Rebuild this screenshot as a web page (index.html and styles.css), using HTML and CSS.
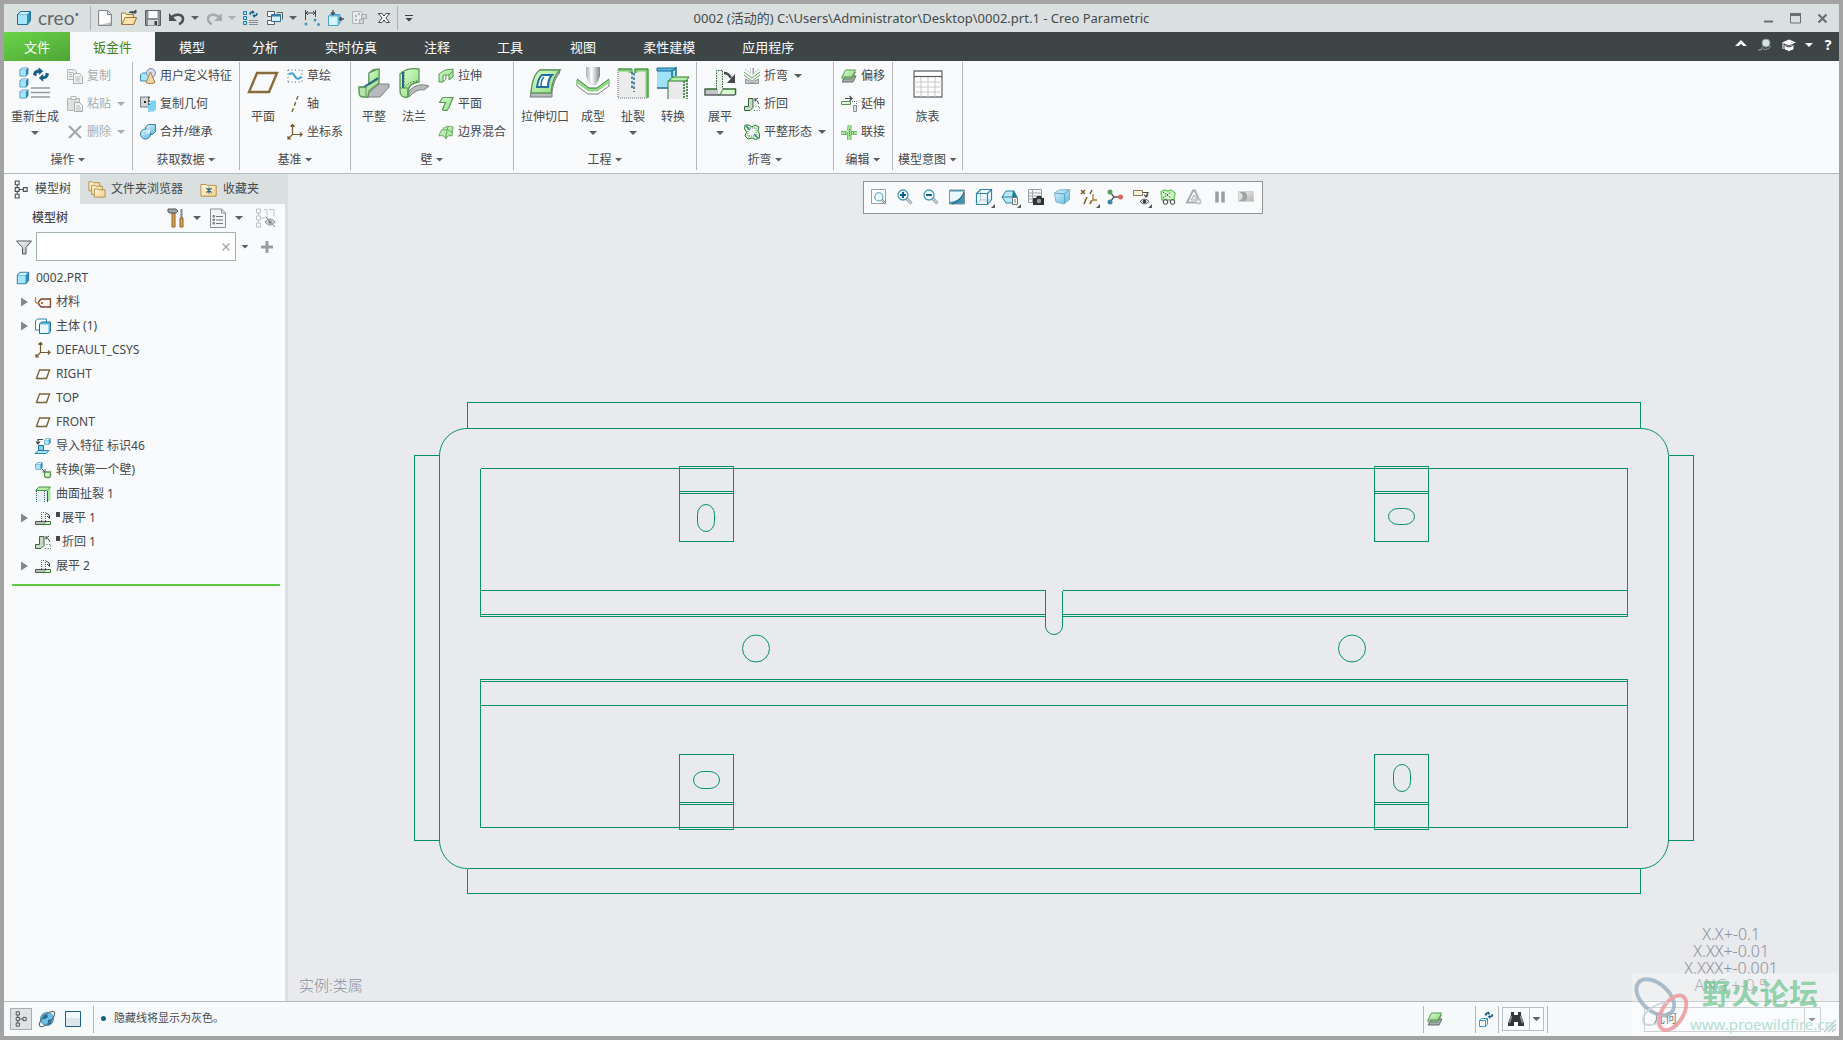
FILE: index.html
```html
<!DOCTYPE html>
<html lang="zh-CN">
<head>
<meta charset="utf-8">
<title>0002 (活动的) - Creo Parametric</title>
<link rel="stylesheet" href="styles.css">
</head>
<body>
<svg class="sprite" aria-hidden="true">
  <defs>
    <linearGradient id="g-blue" x1="0" y1="0" x2="1" y2="1"><stop offset="0" stop-color="#e2f5fd"/><stop offset="1" stop-color="#5cb8e0"/></linearGradient>
    <linearGradient id="g-green" x1="0" y1="0" x2="1" y2="1"><stop offset="0" stop-color="#d9fbd0"/><stop offset="1" stop-color="#8fdc80"/></linearGradient>
    <linearGradient id="g-steel" x1="0" y1="0" x2="1" y2="0"><stop offset="0" stop-color="#a9adb2"/><stop offset=".4" stop-color="#ffffff"/><stop offset="1" stop-color="#7d838b"/></linearGradient>
    <linearGradient id="g-tan" x1="0" y1="0" x2="1" y2="1"><stop offset="0" stop-color="#fff6df"/><stop offset="1" stop-color="#f3cf8c"/></linearGradient>
    <linearGradient id="g-gray" x1="0" y1="0" x2="1" y2="1"><stop offset="0" stop-color="#f4f4f4"/><stop offset="1" stop-color="#b4b4b4"/></linearGradient>
  </defs>
  <symbol id="cube" viewBox="0 0 16 16"><path d="M1.500 4.500l3-3h10v9l-3 4h-10z" fill="#2f8fbb" stroke="#1b6f98"/><path d="M2 4.500l3-2.500h8.500l-2.500 2.500z" fill="#d4f3fd"/><path d="M2 5h9v9H2z" fill="#a5e6fb"/></symbol>
  <symbol id="plane" viewBox="0 0 16 16"><path d="M4.500 4h10l-3 8.500h-10z" fill="none" stroke="#7d6435" stroke-width="1.400"/></symbol>
  <symbol id="csys" viewBox="0 0 16 16"><path d="M5.500 0v10.500H15M5.500 10.500L1 15M3.500 2.500l2-2 2 2M13 8.500l2 2-2 2M1 12v3h3" fill="none" stroke="#765a2a" stroke-width="1.200"/></symbol>
  <symbol id="treeicon" viewBox="0 0 16 20"><path d="M2 1h4v4H2zM2 8h4v4H2zM2 15h4v4H2zM10.500 8h4v4h-4zM4 5v3M4 12v3M6 10h4.500" fill="none" stroke="#4c4f52" stroke-width="1.200"/></symbol>
  <symbol id="swap" viewBox="0 0 16 13"><path d="M1 7c0-3 2-5 5-5V0l4 3.500L6 7V5C4 5 4 6 4 8zM15 5.500c0 3-2 5-5 5V13L6 9.500 10 6v2c2 0 2-1 2-3z" fill="#1a5f88"/></symbol>
  <symbol id="unbend" viewBox="0 0 16 16"><path d="M.5 11.500H7M9 14.500h6.500v-3H11" fill="none" stroke="#39733a"/><path d="M.5 11.500v3h8c2 0 2-3 4-3z" fill="#bcc0bd" stroke="#4f5b50"/><path d="M9.500 14l2-2H15v2z" fill="#d9fbd0"/><path d="M6.500 11V2.500h4V11" fill="#f1f2f2" stroke="#39733a" stroke-dasharray="1 1"/><path d="M11 3.500c2 0 3 1 3.500 4M12 6l2.500 2.500V5" fill="none" stroke="#4a4d50"/></symbol>
  <symbol id="bendback" viewBox="0 0 16 16"><path d="M.5 14.500v-4h4v-8h4.500v9l-3 3z" fill="#c9d8c8" stroke="#2f6b36"/><path d="M10 14.500h5.500v-4H11" fill="none" stroke="#3b7d3d" stroke-dasharray="1 1.500"/><path d="M14.500 8C14 5 13 4 11 4M11 2v3.500M11 4l3-2" fill="none" stroke="#45494c"/></symbol>
  <symbol id="rip" viewBox="0 0 16 16"><path d="M1 5h11v11H1z" fill="#ebecec"/><path d="M12 5l3.500-4v13L12 16z" fill="#a8e79b"/><path d="M.5 4.500L4 1h11.500L12 4.500z" fill="#b4f0a8" stroke="#4a9048"/><path d="M1.500 5v11M9.500 5v11" stroke="#246b87" stroke-dasharray="1 1" fill="none"/><path d="M12.500 5v11" stroke="#2f6b36" fill="none"/></symbol>
  <symbol id="sheets" viewBox="0 0 16 16"><path d="M1 14l4-6h10l-3 6z" fill="#a9adb0" stroke="#66696b"/><path d="M1 9l3.500-7h10L11 9z" fill="url(#g-green)" stroke="#5b9657"/><path d="M1 9v2h10l3.500-7" fill="none" stroke="#5b9657"/></symbol>
  <symbol id="lens" viewBox="0 0 16 16"><path d="M9.500 9.500l5 5" stroke="#8a9095" stroke-width="3"/><path d="M9.500 9.500l5 5" stroke="#d9dcde" stroke-width="1.200"/><circle cx="6" cy="6" r="5" fill="#eefaff" stroke="#4b9abb" stroke-width="1.300"/></symbol>
</svg>

<div class="window">
  <header class="titlebar">
    <div class="qat">
      <svg class="i16 logo" viewBox="0 0 16 16"><use href="#cube"/></svg>
      <span class="brand">creo<sup>•</sup></span>
      <div class="qat-tools">
        <button class="tool" aria-label="新建"><svg class="i16" viewBox="0 0 16 16"><path d="M1.500.5h9l4 4v11h-13z" fill="url(#g-gray)" stroke="#85898c"/><path d="M2.500 1.500h7.500v4h3.500v7l-11 2z" fill="#fff"/><path d="M10.500.5v4h4z" fill="#e3e5e6" stroke="#85898c"/></svg></button>
        <button class="tool" aria-label="打开"><svg class="i16" viewBox="0 0 16 16"><path d="M.5 14.500V3h4l1 1.500h7V8h3l-3 6.500z" fill="url(#g-tan)" stroke="#a07b36"/><path d="M1 14.500L4 7.500h11.500l-3 7z" fill="#fce3ae" stroke="#a07b36"/><path d="M8 3c1-2 4-2 5 0M11 3h4V0z" fill="#45494c" stroke="#45494c"/></svg></button>
        <button class="tool" aria-label="保存"><svg class="i16" viewBox="0 0 16 16"><path d="M.5.5h15v15h-15z" fill="#8c9094" stroke="#5b5f63"/><path d="M3.500 1h9v7h-9z" fill="#fff"/><path d="M3 10h10v5.500H3z" fill="#d8dbde"/><path d="M9.500 11h2.500v4H9.500z" fill="#3a3d40"/></svg></button>
        <button class="tool" aria-label="撤消"><svg class="i16" viewBox="0 0 16 16"><path d="M2 8c4-5 12-4 12 1 0 2-1 4-4 5" fill="none" stroke="#4c5053" stroke-width="2.600"/><path d="M0 3v8h8z" fill="#4c5053"/></svg></button>
        <span class="caret"></span>
        <button class="tool" aria-label="重做"><svg class="i16" viewBox="0 0 16 16"><path d="M14 8C10 3 2 4 2 9c0 2 1 4 4 5" fill="none" stroke="#a6abad" stroke-width="2.600"/><path d="M16 3v8H8z" fill="#a6abad"/></svg></button>
        <span class="caret off"></span>
        <button class="tool" aria-label="重新生成模型"><svg class="i16" viewBox="0 0 16 16"><path d="M.5 1.500h3v3h-3zM.5 6.500h3v3h-3zM.5 11.500h3v3h-3z" fill="#a5e6fb" stroke="#247da6"/><path d="M6 10.500h9M6 12.500h9M6 14.500h9" stroke="#84898c"/><use href="#swap" x="5" y="0" width="11" height="8"/></svg></button>
        <button class="tool" aria-label="窗口"><svg class="i16" viewBox="0 0 16 16"><path d="M.5 1.500h7v5h-7zM.5 10.500h7v4h-7z" fill="#f4f6f7" stroke="#5c6164"/><path d="M4.500 4.500h9v7h-9z" fill="#d8f0fa" stroke="#2d6e8e"/><path d="M4.500 4.500h9v2h-9z" fill="#3a7fa0"/><path d="M10 2.500h5.500v7" fill="none" stroke="#5c6164"/></svg></button>
        <span class="caret"></span>
        <button class="tool" aria-label="尺寸"><svg class="i16" viewBox="0 0 16 16"><path d="M1.500 0v10M11.500 0v7M2 3h9M4 1L2 3l2 2M9 1l2 2-2 2" fill="none" stroke="#45494c"/><circle cx="2" cy="14" r="1.500" fill="#3c9cc8"/><circle cx="11" cy="10" r="1.500" fill="#3c9cc8"/><circle cx="14.500" cy="14.500" r="1.500" fill="#3c9cc8"/></svg></button>
        <button class="tool" aria-label="装配"><svg class="i16" viewBox="0 0 16 16"><path d="M.5 6l2-1.500H12V13l-2 2.500H.5z" fill="#5cb8e0" stroke="#4ba3cc"/><path d="M1 6.500h8.500V15H1z" fill="#d8f4fd"/><path d="M5 0v4M3 2.500l2 2 2-2M16 9h-4M13.500 7l-2 2 2 2" fill="none" stroke="#45494c" stroke-width="1.300"/></svg></button>
        <button class="tool" aria-label="复制模型" disabled><svg class="i16" viewBox="0 0 16 16"><path d="M.5 1.500h8l2 2v10H.5z" fill="#e8eaeb" stroke="#aeb3b5"/><path d="M3 5h2v2H3zM3 9h2v2H3zM6 3h2v2H6z" fill="#aeb3b5"/><path d="M9.500 4.500h5v4h-5zM7.500 9.500h4v4h-4z" fill="#d3d6d7" stroke="#a5aaac"/></svg></button>
        <button class="tool" aria-label="关闭"><svg class="i16" viewBox="0 0 16 16"><path d="M2.500 3.500h3.500l2 2.500 2-2.500h3.500L10 8l3.500 4.500H10L8 10l-2 2.500H2.500L6 8z" fill="#fff" stroke="#45494c"/></svg></button>
      </div>
      <button class="qat-more" aria-label="自定义快速访问工具栏"></button>
    </div>
    <h1 class="title">0002 (活动的) C:\Users\Administrator\Desktop\0002.prt.1 - Creo Parametric</h1>
    <div class="winctl">
      <button class="tool" aria-label="最小化"><svg viewBox="0 0 11 11"><path d="M1 8.500h9" stroke="#6b6f72" stroke-width="2"/></svg></button>
      <button class="tool" aria-label="最大化"><svg viewBox="0 0 11 11"><path d="M.5 1h10v9H.5z" fill="none" stroke="#6b6f72"/><path d="M0 1.500h11" stroke="#6b6f72" stroke-width="3"/></svg></button>
      <button class="tool" aria-label="关闭窗口"><svg viewBox="0 0 11 11"><path d="M1.500 1.500l8 8M9.500 1.500l-8 8" stroke="#6b6f72" stroke-width="2.200"/></svg></button>
    </div>
  </header>

  <nav class="tabs">
    <button class="tab file">文件</button>
    <button class="tab active">钣金件</button>
    <button class="tab">模型</button>
    <button class="tab">分析</button>
    <button class="tab">实时仿真</button>
    <button class="tab">注释</button>
    <button class="tab">工具</button>
    <button class="tab">视图</button>
    <button class="tab">柔性建模</button>
    <button class="tab">应用程序</button>
    <div class="tabs-right">
      <button class="tool" aria-label="最小化功能区"><svg viewBox="0 0 16 16"><path d="M2 9l6-6 6 6h-3.500L8 7 5.500 9z" fill="#fff"/></svg></button>
      <button class="tool" aria-label="搜索"><svg viewBox="0 0 16 16"><circle cx="9" cy="6" r="4" fill="#d7e2e4" stroke="#8b9799"/><path d="M5.500 10L4 13H1M6 12c3 1 6 0 8-3" fill="none" stroke="#9fa9aa"/></svg></button>
      <button class="tool" aria-label="学习"><svg viewBox="0 0 16 16"><path d="M8 2.500l7 3L8 8.500 1 5.500z" fill="#fff"/><path d="M4 8l4 2 4-2v4l-4 1.500L4 12zM2 6v6" fill="#fff" stroke="#fff"/><path d="M4 8.500L8 10l4-1.500" fill="none" stroke="#3d4547"/></svg></button>
      <span class="caret white"></span>
      <button class="tool" aria-label="帮助"><b>?</b></button>
    </div>
  </nav>

  <section class="ribbon">
    <div class="group">
      <div class="group-body">
        <button class="big wide"><svg viewBox="0 0 32 32"><use href="#cube" x="0" y="0" width="10" height="10"/><use href="#cube" x="0" y="11" width="10" height="10"/><use href="#cube" x="0" y="22" width="10" height="10"/><use href="#swap" x="13" y="0" width="18" height="15"/><path d="M12 21h19M12 25.500h19M12 30h19" stroke="#95999c" stroke-width="1.500"/></svg>重新生成<span class="caret"></span></button>
        <div class="col">
          <button class="small" disabled><svg viewBox="0 0 16 16"><path d="M.5 1.500h7l2 2v8h-9z" fill="#eceded" stroke="#b4b8b9"/><path d="M6.500 5.500h6l3 3v7h-9z" fill="#f3f3f3" stroke="#a9adae"/><path d="M2 4.500h4M2 6.500h3M2 8.500h3M8.500 9h5M8.500 11h5M8.500 13h5" stroke="#b4b8b9"/></svg>复制</button>
          <button class="small" disabled><svg viewBox="0 0 16 16"><path d="M.5 2.500h12v12H.5z" fill="#dfe1e1" stroke="#b4b8b9"/><path d="M4 .5h5v3H4z" fill="#f3f3f3" stroke="#b4b8b9"/><path d="M7.500 6.500h5l3 3v6h-8z" fill="#f3f3f3" stroke="#a9adae"/><path d="M9 10h4M9 12h5M9 14h5" stroke="#b4b8b9"/></svg>粘贴<span class="caret off"></span></button>
          <button class="small" disabled><svg viewBox="0 0 16 16"><path d="M2 2l12 12M14 2L2 14" stroke="#a4a7a8" stroke-width="2.200"/></svg>删除<span class="caret off"></span></button>
        </div>
      </div>
      <button class="group-label">操作<span class="caret"></span></button>
    </div>
    <div class="group">
      <div class="group-body">
        <div class="col">
          <button class="small"><svg viewBox="0 0 16 16"><path d="M.5 7l2-2h7v6l-2 2h-7z" fill="#a5e6fb" stroke="#3b8fb5"/><circle cx="11" cy="5" r="4.500" fill="#d5d9f4" stroke="#7f88b8"/><path d="M10.500 4L6 14.500c2 1.500 7 1.500 9 0z" fill="#eed4a6" stroke="#a9853f"/></svg>用户定义特征</button>
          <button class="small"><svg viewBox="0 0 16 16"><path d="M.5 1h8v10h-8z" fill="#d3d6d8" stroke="#777b7e"/><path d="M4 5h2v2H4z" fill="#222"/><path d="M9 .5v15" stroke="#3f4346" stroke-dasharray="2 1.500" stroke-width="1.500"/><path d="M10 6l2-1.500h4V13l-2 2.500h-6V9h2z" fill="#7fd3f2"/></svg>复制几何</button>
          <button class="small"><svg viewBox="0 0 16 16"><path d="M5.500 3l3-2.500h7v7l-3 3h-7z" fill="url(#g-blue)" stroke="#2f7fa6"/><circle cx="5.500" cy="10" r="5" fill="url(#g-blue)" stroke="#2f7fa6"/><path d="M6 5.500h4v4H6z" fill="#d8f2fc"/></svg>合并/继承</button>
        </div>
      </div>
      <button class="group-label">获取数据<span class="caret"></span></button>
    </div>
    <div class="group">
      <div class="group-body">
        <button class="big"><svg viewBox="0 0 32 32"><path d="M10 6h20l-8 19H2z" fill="none" stroke="#8a6c3a" stroke-width="2.400"/></svg>平面</button>
        <div class="col">
          <button class="small"><svg viewBox="0 0 16 16"><path d="M1 2h14M1 14h14M1 2v12M15 2v12" stroke="#54585b" stroke-dasharray="1 2.500"/><path d="M2 6.500c3-3 5 0 6 2s4 4 6 0" fill="none" stroke="#3aa3dc" stroke-width="2"/></svg>草绘</button>
          <button class="small"><svg viewBox="0 0 16 16"><path d="M11 0L5 16" stroke="#7d6435" stroke-width="1.400" stroke-dasharray="4 2.500"/></svg>轴</button>
          <button class="small"><svg viewBox="0 0 16 16"><use href="#csys"/></svg>坐标系</button>
        </div>
      </div>
      <button class="group-label">基准<span class="caret"></span></button>
    </div>
    <div class="group">
      <div class="group-body">
        <button class="big"><svg viewBox="0 0 32 32"><path d="M12 25l9-8h10v3l-9 10H8z" fill="#b7babd" stroke="#7d8184"/><path d="M1 20h6l4-3V6l4-3 6-1v14l-10 8-1 6H5c-3 0-4-2-4-5z" fill="#b4e4a9" stroke="#5b9657" stroke-width="1.400"/><path d="M11 6l10-4v10l-10 6z" fill="url(#g-green)" stroke="#5b9657"/><path d="M6 20l14-9" stroke="#1f6587" stroke-width="1.800"/><path d="M2 20h6v9" fill="none" stroke="#5b9657"/></svg>平整</button>
        <button class="big"><svg viewBox="0 0 32 32"><path d="M11 24c7-7 12-7 20-5l-5 4c-5-1-9 1-15 7z" fill="#b7babd" stroke="#7d8184"/><path d="M2 7c4-4 11-6 19-5v13c-7 1-10 4-11 8v7c-5 1-8-1-8-6z" fill="url(#g-green)" stroke="#5b9657" stroke-width="1.300"/><path d="M6 5v16c4-5 9-7 15-7" fill="none" stroke="#2f6b36" stroke-dasharray="1.500 1.500"/><path d="M5 5v16" stroke="#1f6587" stroke-width="2"/><path d="M2 21h8v8" fill="none" stroke="#5b9657"/></svg>法兰</button>
        <div class="col">
          <button class="small"><svg viewBox="0 0 16 16"><path d="M1 6l6-4 8-1v8l-4 3V7H5v7H1z" fill="url(#g-green)" stroke="#5b9657"/><path d="M5 14l3-3V7M11 7l4-4" fill="none" stroke="#5b9657"/></svg>拉伸</button>
          <button class="small"><svg viewBox="0 0 16 16"><path d="M5 1.500h10l-4 10-2 3H5.500l-1-1 3-7H1.500z" fill="url(#g-green)" stroke="#5b9657" stroke-width="1.200"/></svg>平面</button>
          <button class="small"><svg viewBox="0 0 16 16"><path d="M1 12C3 4 8 1 15 3l-1 9c-3-1-5 0-6 3-1-3-4-4-7-3z" fill="url(#g-green)" stroke="#6fa56a"/><path d="M8 14c0-5 1-8 2-11M4 6c4-1 7 0 10 2" fill="none" stroke="#6fa56a"/></svg>边界混合</button>
        </div>
      </div>
      <button class="group-label">壁<span class="caret"></span></button>
    </div>
    <div class="group">
      <div class="group-body">
        <button class="big wide"><svg viewBox="0 0 32 32"><path d="M2 26C3 14 6 6 11 3h20l-1 4c-3 3-6 10-7 18v5H1z" fill="#b9bcbf" stroke="#75797c"/><path d="M2 26C3 14 6 6 11 3h20c-5 4-8 12-9 23z" fill="url(#g-green)" stroke="#5b9657" stroke-width="1.300"/><path d="M8 20c1-6 2-10 5-12h10c-3 3-4 7-4 12z" fill="#fff" stroke="#1f6fa0" stroke-width="2"/><path d="M12 19c0-4 1-7 3-9" fill="none" stroke="#1f6fa0" stroke-width="1.500"/></svg>拉伸切口</button>
        <button class="big"><svg viewBox="0 0 32 32"><path d="M9 0h14v9c-1 4-3 6-4 9h-6c-1-4-3-5-4-9z" fill="url(#g-steel)"/><path d="M0 13l12 9h8l12-9v6l-11 8H11L0 19z" fill="#fff" stroke="#75797c"/><path d="M0 14l12 9h8l12-9" fill="none" stroke="#8fdc80" stroke-width="3"/><path d="M0 12l12 9h8l12-9" fill="none" stroke="#3b7d3d"/></svg>成型<span class="caret"></span></button>
        <button class="big"><svg viewBox="0 0 32 32"><path d="M1 3h30v28H1z" fill="#ececec"/><path d="M1 3v28h29" fill="none" stroke="#66696b" stroke-dasharray="1 1"/><path d="M1 3h12v3M30 31V3H19v3" fill="none" stroke="#7fce70" stroke-width="3"/><path d="M1 2h14v4M31 31V2H18v4" fill="none" stroke="#3b7d3d"/><path d="M15 5v17M17 6v19" fill="none" stroke="#1f6587" stroke-width="1.500" stroke-dasharray="2.500 2"/></svg>扯裂<span class="caret"></span></button>
        <button class="big"><svg viewBox="0 0 32 32"><path d="M0 3l3-2h16v7l-4 12H0z" fill="#9fe2fa"/><path d="M15 4l4-3v8M0 21h14M15 4v6" fill="none" stroke="#176b91" stroke-width="1.500"/><path d="M0 1h19l-4 3H0z" fill="#5cb8e0" stroke="#176b91"/><path d="M11 14h20v14l-2 4H11z" fill="#e9eae9"/><path d="M11 14l5-4h16l-3 4z" fill="#b4f0a8"/><path d="M11 14h18l3-4H16zM11 14v18" fill="none" stroke="#2f7d35"/><path d="M27 14v18M30 13v19" stroke="#2f6b36" stroke-dasharray="2 1" stroke-width="1.500"/></svg>转换</button>
      </div>
      <button class="group-label">工程<span class="caret"></span></button>
    </div>
    <div class="group">
      <div class="group-body">
        <button class="big"><svg viewBox="0 0 32 32"><path d="M12 3h7v20l-4 5h-3z" fill="#ececec"/><path d="M1 22h13v6H1z" fill="#c3c6c7"/><path d="M18 22h13v6H14z" fill="#d9fbd0"/><path d="M.5 22H13M19 22h12.500v6" fill="none" stroke="#2f6b36" stroke-width="1.500"/><path d="M1 22v6h30" fill="none" stroke="#5c6063" stroke-width="1.500"/><path d="M14 28c4 0 3-5 6-6" fill="none" stroke="#2f6b36"/><path d="M12.500 22V3.500h6V22" fill="none" stroke="#2f6b36" stroke-dasharray="1.500 1"/><path d="M20 6c4 0 6 3 7 5" fill="none" stroke="#45494c" stroke-width="2.500"/><path d="M31 7v9h-8z" fill="#45494c"/></svg>展平<span class="caret"></span></button>
        <div class="col">
          <button class="small"><svg viewBox="0 0 16 16"><path d="M6 0h4v5L8 8 6 5z" fill="url(#g-steel)"/><path d="M0 4l8 6 8-6M0 7l8 6 8-6" fill="none" stroke="#65a05f"/><path d="M1 1l5 4M15 1l-5 4" stroke="#8b8f92" stroke-dasharray="1 1"/><path d="M1.500 11l6.500 3.500 6.500-3.500v4.500h-13z" fill="#c9cccd" stroke="#8b8f92"/></svg>折弯<span class="caret"></span></button>
          <button class="small"><svg viewBox="0 0 16 16"><use href="#bendback"/></svg>折回</button>
          <button class="small"><svg viewBox="0 0 16 16"><path d="M1 1h4l3 2 3-2 4 2-1 4 1.500 3v4l-4 1.500L8 14l-4 1-3-3 1.500-4L.5 5z" fill="#d2f5ca" stroke="#2f7d35"/><path d="M4 4h8v8H4z" fill="#f1fbef" stroke="#75797c" stroke-dasharray="1 1"/><path d="M2 2l4 4M10 10l4 4" stroke="#1f7fae" stroke-width="1.300"/></svg>平整形态<span class="caret"></span></button>
        </div>
      </div>
      <button class="group-label">折弯<span class="caret"></span></button>
    </div>
    <div class="group">
      <div class="group-body">
        <div class="col">
          <button class="small"><svg viewBox="0 0 16 16"><use href="#sheets"/></svg>偏移</button>
          <button class="small"><svg viewBox="0 0 16 16"><path d="M.5 5.500h9v3h-9z" fill="#d9fbd0" stroke="#5c8d59"/><path d="M4 2.500h7M8.500 0L11 2.500 8.500 5" stroke="#45494c" fill="none" stroke-width="1.200"/><path d="M11 5.500h4.500v3" stroke="#5c6063" fill="none" stroke-dasharray="1 1"/><path d="M12.500 9.500h3v6h-3z" fill="#dfe1e1" stroke="#8b8f92"/></svg>延伸</button>
          <button class="small"><svg viewBox="0 0 16 16"><path d="M0 9h16M8.500 1v15" stroke="#a5e699" stroke-width="3"/><path d="M0 7.500h4c2 0 3-2 3-6.500M0 10.500h6.500V16M10 1v6.500h6M10 16v-5.500h6" fill="none" stroke="#7db478"/><path d="M8.500 5v8M4 9h9" stroke="#1f7fae" stroke-dasharray="1 1"/></svg>联接</button>
        </div>
      </div>
      <button class="group-label">编辑<span class="caret"></span></button>
    </div>
    <div class="group">
      <div class="group-body centered">
        <button class="big"><svg viewBox="0 0 32 32"><path d="M2 4h28v26H2z" fill="#fff" stroke="#75797c" stroke-width="1.400"/><path d="M2 15h28M2 20h28M2 25h28M9 10v20M16 10v20M23 10v20" stroke="#c4c7c9"/><path d="M2 9.500h28" stroke="#55595c" stroke-width="1.200"/></svg>族表</button>
      </div>
      <button class="group-label">模型意图<span class="caret"></span></button>
    </div>
  </section>

  <main class="work">
    <aside class="side">
      <div class="side-tabs">
        <button class="side-tab active"><svg class="t-tree" viewBox="0 0 16 20"><use href="#treeicon"/></svg>模型树</button>
        <button class="side-tab"><svg class="t-fold" viewBox="0 0 20 20"><path d="M1 2h4l1 1h7v9H1z" fill="url(#g-tan)" stroke="#b0893f"/><path d="M4 6h4l1 1h7v9H4z" fill="url(#g-tan)" stroke="#b0893f"/><path d="M7 10h4l1 1h7v8H7z" fill="url(#g-tan)" stroke="#b0893f"/></svg>文件夹浏览器</button>
        <button class="side-tab"><svg class="t-fold" viewBox="0 0 20 20"><path d="M1 5h6l1 1h10v12H1z" fill="url(#g-tan)" stroke="#b0893f"/><path d="M10 8v7M7 9l6 5M13 9l-6 5" stroke="#1f6587" stroke-width="1.300"/></svg>收藏夹</button>
      </div>
      <div class="side-head">
        <h2>模型树</h2>
        <button class="tool" aria-label="设置"><svg class="i20" viewBox="0 0 20 20"><path d="M6 5h3v14H6z" fill="#d8a452" stroke="#8a6528"/><path d="M2 1h8l2 2-2 2H4L2 4z" fill="#9ea2a6" stroke="#55595c"/><path d="M15.500 1v9" stroke="#84898c" stroke-width="2"/><path d="M14 10h3v9h-3z" fill="#d8a452" stroke="#8a6528"/></svg></button>
        <span class="caret"></span>
        <button class="tool" aria-label="显示"><svg class="i20" viewBox="0 0 20 20"><path d="M2.500 1h11l4 4v14.500h-15z" fill="#f1f5f6" stroke="#8a9194"/><path d="M13.500 1v4h4" fill="none" stroke="#8a9194"/><path d="M8 8.500h7M8 12h7M8 15.500h7" stroke="#75797c"/><path d="M5 7.500h1.500V9H5zM5 11h1.500v1.500H5zM5 14.500h1.500V16H5z" fill="none" stroke="#75797c"/></svg></button>
        <span class="caret"></span>
        <button class="tool hide-tree" aria-label="隐藏" disabled><svg class="i20" viewBox="0 0 20 20"><path d="M.5 1h4v4h-4zM.5 8h4v4h-4zM.5 15h4v4h-4zM2.500 5v3M2.500 12v3M4.500 10H9M9 9h3M8 1.500h3v6M13 1.500h5v7" fill="none" stroke="#c0c4c5"/><path d="M9 14c3-4 7-4 10 0-3 4-7 4-10 0z" fill="#cfd1d2" stroke="#8b8f91"/><circle cx="14" cy="14" r="1.500" fill="#6f7375"/><path d="M10 9l9 10" stroke="#8b8f91"/></svg></button>
      </div>
      <div class="search-row">
        <svg class="i16" viewBox="0 0 16 16"><path d="M.5 2h15L10 8.500V15H6.500V8.500z" fill="url(#g-gray)" stroke="#55595c"/></svg>
        <div class="search">
          <input type="text" aria-label="搜索模型树">
          <button class="tool" aria-label="清除"><svg class="clear" viewBox="0 0 8 8"><path d="M.5.500l7 7M7.500.500l-7 7" stroke="#a0a5a7" stroke-width="1.300"/></svg></button>
        </div>
        <span class="caret"></span>
        <button class="tool" aria-label="添加"><svg class="plus" viewBox="0 0 12 12"><path d="M6 0v12M0 6h12" stroke="#9b9fa1" stroke-width="3"/></svg></button>
      </div>
      <ul class="tree">
        <li class="root"><svg viewBox="0 0 16 16"><use href="#cube"/></svg>0002.PRT</li>
        <li class="more"><svg viewBox="0 0 16 16"><path d="M6 5h9.500v8H6L3.500 10V8z" fill="#fbf4ee" stroke="#7a4431" stroke-width="1.300"/><circle cx="7" cy="9" r="1" fill="#7a4431"/><path d="M.5 3v5c2 2 3 2 4 1" fill="none" stroke="#b48a35" stroke-width="1.300"/></svg>材料</li>
        <li class="more"><svg viewBox="0 0 16 16"><path d="M.5 3l2-2h9v10l-1 1H.5z" fill="#fafdff" stroke="#2e84a9"/><path d="M4.500 6l2-2h9v9.500l-1.500 2H4.500z" fill="#5cb8e0" stroke="#1b6f98"/><path d="M5 6.500h8.500V15H5z" fill="#e9f8fd"/></svg>主体 (1)</li>
        <li><svg viewBox="0 0 16 16"><use href="#csys"/></svg>DEFAULT_CSYS</li>
        <li><svg viewBox="0 0 16 16"><use href="#plane"/></svg>RIGHT</li>
        <li><svg viewBox="0 0 16 16"><use href="#plane"/></svg>TOP</li>
        <li><svg viewBox="0 0 16 16"><use href="#plane"/></svg>FRONT</li>
        <li><svg viewBox="0 0 16 16"><use href="#cube" x="9" y="0" width="7" height="7"/><path d="M0 15.500l3-3h11l-3 3z" fill="#a5e6fb" stroke="#2e84a9"/><path d="M3.500 7.500h5v5h-5z" fill="#7fcdf0" stroke="#1b6f98"/><path d="M8 1.500H3V5M1 3.500L3 6l2-2.500" fill="none" stroke="#45494c" stroke-width="1.200"/></svg>导入特征 标识46</li>
        <li><svg viewBox="0 0 16 16"><use href="#cube" x="0" y="0" width="8" height="8"/><path d="M7 7l3 3M10 7.500V10H7.500" fill="none" stroke="#45494c"/><path d="M9.500 11l1.500-1h4.500v4l-1 1.500h-3l-2-1z" fill="#d2f5ca" stroke="#5b9657" stroke-width="1.300"/></svg>转换(第一个壁)</li>
        <li><svg viewBox="0 0 16 16"><use href="#rip"/></svg>曲面扯裂 1</li>
        <li class="more"><svg viewBox="0 0 16 16"><use href="#unbend"/></svg><i class="mark"></i>展平 1</li>
        <li><svg viewBox="0 0 16 16"><use href="#bendback"/></svg><i class="mark"></i>折回 1</li>
        <li class="more"><svg viewBox="0 0 16 16"><use href="#unbend"/></svg>展平 2</li>
      </ul>
      <hr class="insert">
    </aside>

    <section class="stage">
      <svg class="drawing" viewBox="288 174 1551 827" role="img" aria-label="展平钣金件线框">
        <g class="lines">
          <path d="M467.500 428.500V402.500H1640.500V428.500M467.500 868.500V893.500H1640.500V868.500M439.500 455.500H414.500V840.500H439.500M1668.500 455.500H1693.500V840.500H1668.500"/>
          <path d="M467.500 428.500H1640.500M467.500 868.500H1640.500M439.500 455.500V840.500M1668.500 455.500V840.500"/>
          <path d="M1045.500 590.500H480.500M1062.500 590.500H1627.500M480.500 614.500H1045.500M1062.500 614.500H1627.500M480.500 468.500H1627.500V616.500H1062.500M480.500 468.500V616.500H1045.500M1045.500 590.500V626M1062.500 590.500V626"/>
          <path d="M480.500 679.500H1627.500V827.500H480.500zM480.500 681.500H1627.500M480.500 705.500H1627.500"/>
          <path d="M679.500 466.500H733.500V541.500H679.500zM679.500 491.500H733.500M679.500 493.500H733.500M1374.500 466.500H1428.500V541.500H1374.500zM1374.500 491.500H1428.500M1374.500 493.500H1428.500"/>
          <path d="M679.500 754.500H733.500V829.500H679.500zM679.500 802.500H733.500M679.500 804.500H733.500M1374.500 754.500H1428.500V829.500H1374.500zM1374.500 802.500H1428.500M1374.500 804.500H1428.500"/>
        </g>
        <g class="curves">
          <path d="M439.500 455.500C440 440 452 428.500 467.500 428.500M1640.500 428.500C1656 428.500 1667.500 440 1668.500 455.500M439.500 840.500C440 856 452 868.500 467.500 868.500M1640.500 868.500C1656 868.500 1667.500 856 1668.500 840.500"/>
          <path d="M1045.500 626a8.500 8.500 0 0 0 17 0"/>
          <circle cx="756" cy="648.500" r="13.500"/>
          <circle cx="1352" cy="648.500" r="13.500"/>
          <rect x="697.500" y="504.500" width="17" height="27" rx="8.500" ry="10"/>
          <rect x="1388.500" y="508.500" width="26" height="16" rx="10" ry="8"/>
          <rect x="693.500" y="771.500" width="26" height="17" rx="10" ry="8.500"/>
          <rect x="1393.500" y="764.500" width="17" height="27" rx="8.500" ry="10"/>
        </g>
      </svg>
      <div class="viewbar">
        <button class="tool" aria-label="重新调整"><svg viewBox="0 0 16 16"><path d="M.5.5h14v14H.5z" fill="#fff" stroke="#9a9ea1"/><use href="#lens" x="3" y="3" width="13" height="13"/></svg></button>
        <button class="tool" aria-label="放大"><svg viewBox="0 0 16 16"><use href="#lens"/><path d="M6 3v6M3 6h6" stroke="#135f88" stroke-width="2"/></svg></button>
        <button class="tool" aria-label="缩小"><svg viewBox="0 0 16 16"><use href="#lens"/><path d="M3 6h6" stroke="#135f88" stroke-width="2"/></svg></button>
        <button class="tool" aria-label="重画"><svg viewBox="0 0 16 16"><path d="M.5 1h15v14H.5z" fill="#3b93b8" stroke="#8d9194"/><path d="M1 2.500h14C13 9 8 12 1 13z" fill="#eaf7fc"/><path d="M15 3C12 10 7 14 3 15" fill="none" stroke="#13587c"/></svg></button>
        <button class="tool sub" aria-label="显示样式"><svg viewBox="0 0 16 16"><path d="M.5 4.500l4-4h11v10l-4 5H.5z" fill="#f3fbfe" stroke="#2e84a9" stroke-width="1.200"/><path d="M4.500 1v10H15M4.500 11l-4 4" fill="none" stroke="#a3c6d6"/><path d="M.5 4.500h11v11M11.500 4.500l4-4" fill="none" stroke="#2e84a9" stroke-width="1.200"/></svg></button>
        <button class="tool sub" aria-label="已保存方向"><svg viewBox="0 0 16 16"><path d="M0 8l4-6h8l3 6-3 6H4z" fill="#b5e8f9" stroke="#2e84a9"/><path d="M11 1l4 7h-5z" fill="#237ba3"/><path d="M0 8h10" stroke="#2e84a9"/><path d="M10.500 8.500h5v7h-5z" fill="#fff" stroke="#6c7073"/><path d="M12 11h2M12 13h2" stroke="#6c7073"/></svg></button>
        <button class="tool" aria-label="视图管理器"><svg viewBox="0 0 16 16"><path d="M.5.5h13v13H.5z" fill="#f3f4f5" stroke="#9a9ea1"/><path d="M1 4h12M1 7h12M1 10h12M4.500 1v12" stroke="#a3a7a9"/><path d="M5 9h3l1-2h4l1 2h2v7H5z" fill="#2f3234"/><circle cx="11" cy="12" r="2.200" fill="#9a9ea1"/></svg></button>
        <button class="tool" aria-label="透视图"><svg viewBox="0 0 16 16"><path d="M.5 4L5 1l10.500-.5v10L10 15l-8-2z" fill="url(#g-blue)" stroke="#7fb4cb"/><path d="M.5 4l10 1 4.500-4M10.500 5v10" fill="none" stroke="#5da5c4"/></svg></button>
        <button class="tool sub" aria-label="基准显示"><svg viewBox="0 0 16 16"><path d="M0 1l4 4M4 1L0 5M11 1L9 5M6 8l-3 7M9 15l1.500-3.500" stroke="#7a5a22" stroke-width="1.500"/><path d="M12 5v6h4M12 11l-3 3" fill="none" stroke="#a9792a" stroke-width="1.300"/></svg></button>
        <button class="tool" aria-label="旋转中心"><svg viewBox="0 0 16 16"><path d="M3 3l4 5M7 8l-4 5M7 8h6" stroke="#55595c" stroke-width="1.300"/><circle cx="3" cy="3" r="2.500" fill="#5a9d5e"/><circle cx="3" cy="13" r="2.500" fill="#3f83ae"/><circle cx="13.500" cy="8" r="2.500" fill="#d9665b"/></svg></button>
        <button class="tool sub" aria-label="注释显示"><svg viewBox="0 0 16 16"><path d="M.5 1.500h9v5h-9z" fill="#fff6df" stroke="#8a7a4e"/><path d="M10 3.500h5l-2 4M11 5.500l2 2.500 2-2" fill="none" stroke="#45494c" stroke-width="1.200"/><path d="M7 12.500c3-3 6-3 9 0-3 3-6 3-9 0z" fill="#fff" stroke="#45494c"/><circle cx="11.500" cy="12.500" r="1.800" fill="#303335"/></svg></button>
        <button class="tool" aria-label="平整预览"><svg viewBox="0 0 16 16"><path d="M1 3l3-2 4 1 3-1 4 3-1 7H2z" fill="#d2f5ca" stroke="#6fc765" stroke-width="1.400"/><path d="M3 3l8 6M3 9l8-6" stroke="#2f6b36" stroke-dasharray="1.500 1"/><circle cx="5.500" cy="13" r="2.300" fill="#fff" stroke="#303335"/><circle cx="12.500" cy="13" r="2.300" fill="#fff" stroke="#303335"/></svg></button>
        <button class="tool" aria-label="仿真" disabled><svg viewBox="0 0 16 16"><path d="M7 1.500h2l5 12H1z" fill="none" stroke="#a9adae" stroke-width="2"/><path d="M5 11l3-5 3 5z" fill="#ececec" stroke="#a9adae"/><circle cx="12.500" cy="12.500" r="3" fill="#c3c6c7"/><path d="M11.500 11l3 1.500-3 1.500z" fill="#fff"/></svg></button>
        <button class="tool" aria-label="暂停" disabled><svg viewBox="0 0 16 16"><path d="M5 2.500v11M11 2.500v11" stroke="#9b9fa0" stroke-width="3.500"/></svg></button>
        <button class="tool" aria-label="结果" disabled><svg viewBox="0 0 16 16"><path d="M.5 2.500h15v10H.5z" fill="url(#g-gray)" stroke="#d0d3d4"/><path d="M1 3h6c3 3 3 6 0 9H1c5-2 5-7 0-9z" fill="#9fa3a4"/></svg></button>
      </div>
      <p class="instance">实例:类属</p>
      <p class="tolerance">X.X+-0.1<br>X.XX+-0.01<br>X.XXX+-0.001<br>ANG.+-0.5</p>
    </section>
  </main>

  <footer class="status">
    <button class="st-toggle" aria-label="模型树开关"><svg class="i16" viewBox="0 0 16 20"><use href="#treeicon"/></svg></button>
    <button class="tool" aria-label="浏览器"><svg class="i16" viewBox="0 0 16 16"><circle cx="8" cy="8" r="6.500" fill="#6cc0e8" stroke="#3f93bc"/><path d="M4 4l4-1 1 3-3 2-3 0zM9 9l4-1-1 5-3 1z" fill="#1c6d98"/><ellipse cx="8" cy="8" rx="10" ry="4" fill="none" stroke="#686c6f" stroke-width="1.200" transform="rotate(-45 8 8)"/></svg></button>
    <button class="tool" aria-label="全屏"><svg class="i16" viewBox="0 0 16 16"><path d="M.5.5h15v15H.5z" fill="#dce7ed" stroke="#1d6084"/><path d="M1 1h14v6H1z" fill="#f1f7fa"/></svg></button>
    <span class="rule"></span>
    <p class="message">隐藏线将显示为灰色。</p>
    <div class="st-right">
      <span class="rule"></span>
      <button class="tool sheet" aria-label="图层"><svg class="i16" viewBox="0 0 16 16"><use href="#sheets"/></svg></button>
      <span class="rule"></span>
      <button class="tool" aria-label="重新生成状态"><svg class="i16" viewBox="0 0 16 16"><path d="M.5 9.500l2-2h6v6l-2 2h-6zM.5 9.500h6v6M6.500 9.500l2-2" fill="none" stroke="#3c9cc8"/><use href="#swap" x="4" y="0" width="12" height="8"/></svg></button>
      <span class="rule"></span>
      <div class="find">
        <button class="tool" aria-label="查找"><svg class="i16" viewBox="0 0 16 16"><path d="M3 1h3v3h4V1h3v3l3 8v3h-6v-4H6v4H0v-3l3-8z" fill="#34373a"/><path d="M3.500 5l-2 7M12.500 5l2 7" stroke="#8d9194" stroke-width="1.500"/></svg></button>
        <button class="tool drop" aria-label="查找选项"><span class="caret"></span></button>
      </div>
      <span class="rule"></span>
      <div class="filter">
        <select aria-label="选择过滤器"><option>几何</option></select>
        <span class="caret"></span>
      </div>
      <svg class="grip" viewBox="0 0 12 12"><path d="M0 12L12 0M4 12l8-8M8 12l4-4" stroke="#a3a9ab" stroke-width="1.300"/></svg>
    </div>
  </footer>

  <div class="watermark">
    <svg viewBox="0 0 60 62"><g fill="none"><ellipse cx="23" cy="23" rx="14" ry="23" stroke="#9fb2c2" stroke-width="4" transform="rotate(-48 23 23)"/><ellipse cx="41" cy="39" rx="11" ry="20" stroke="#ea9a9d" stroke-width="4" transform="rotate(32 41 39)"/><path d="M36 28c-14 1-28 12-25 21 2 4 8 3 14 1" stroke="#c9d3da" stroke-width="2"/></g></svg>
    <strong>野火论坛</strong>
    <span>www.proewildfire.cn</span>
  </div>
</div>
</body>
</html>
```
FILE: styles.css
```css
* { box-sizing: border-box; }

body {
  margin: 0;
  font: 12px/20px "Noto Sans", "Noto Sans CJK SC", sans-serif;
  color: #45494c;
}

h1, h2, p, ul { margin: 0; padding: 0; }

button {
  padding: 0;
  border: 0;
  background: none;
  color: inherit;
  font: inherit;
  white-space: nowrap;
}

svg { display: block; flex: none; overflow: visible; }

.sprite { position: absolute; width: 0; height: 0; }

.window {
  position: relative;
  display: flex;
  flex-direction: column;
  min-height: 100vh;
  border: 4px solid #a3a3a3;
  background: #f8fafc;
}

.i16 { width: 16px; height: 16px; }
.i20 { width: 20px; height: 20px; }

.tool { display: flex; align-items: center; justify-content: center; flex: none; }

.caret {
  flex: none;
  width: 8px;
  height: 4px;
  background: #5b5f62;
  clip-path: polygon(0 0, 100% 0, 50% 100%);
}
.caret.off { background: #a9adae; }
.caret.white { background: #fff; }

/* Title bar */
.titlebar {
  display: grid;
  grid-template-columns: 1fr auto 1fr;
  align-items: center;
  height: 28px;
  background: #dae0df;
}
.qat { display: flex; align-items: center; }
.logo { margin: 0 6px 0 12px; }
.brand { width: 52px; font: 19px/24px Lato, sans-serif; color: #63686b; }
.brand sup { font-size: 8px; line-height: 8px; vertical-align: 8px; }
.qat-tools {
  display: flex;
  align-items: center;
  gap: 8px;
  height: 24px;
  padding: 0 5px 0 6px;
  border: solid #aab0b0;
  border-width: 0 1px;
}
.qat-tools .caret { margin: 0 -1px 0 -2px; }
.qat-more {
  display: flex;
  flex-direction: column;
  gap: 2px;
  padding: 0 7px;
}
.qat-more::before {
  content: "";
  width: 8px;
  height: 1px;
  background: #3f4346;
}
.qat-more::after {
  content: "";
  width: 8px;
  height: 4px;
  background: #3f4346;
  clip-path: polygon(0 0, 100% 0, 50% 100%);
}
.title { font-size: 13px; font-weight: 400; line-height: 24px; color: #45494c; }
.winctl { display: flex; justify-content: flex-end; gap: 16px; padding-right: 11px; }
.winctl svg { width: 11px; height: 11px; }

/* Ribbon tabs */
.tabs {
  display: flex;
  height: 29px;
  background: #3d4547;
  color: #fff;
  font-size: 13px;
}
.tab { padding: 0 23px 0 24px; }
.tab.file { padding: 0 20px; background: linear-gradient(160deg, #69d546, #4fa438); }
.tab.active { padding: 0 23px; background: #f8fafc; color: #3f8426; }
.tabs-right {
  display: flex;
  align-items: center;
  gap: 8px;
  margin-left: auto;
  padding: 0 4px 3px 0;
}
.tabs-right svg { width: 16px; height: 16px; }
.tabs-right b { width: 14px; font-size: 14px; }

/* Ribbon */
.ribbon {
  display: flex;
  height: 113px;
  border-bottom: 1px solid #b4bbbb;
}
.group {
  display: flex;
  flex-direction: column;
  margin: 1px 0 3px;
  border-right: 1px solid #b4b8ba;
}
.group-body { display: flex; gap: 8px; height: 87px; padding: 0 7px; }
.group-body.centered { justify-content: center; }
.big {
  display: flex;
  flex-direction: column;
  align-items: center;
  width: 32px;
  padding-top: 5px;
}
.big.wide { width: 48px; }
.big svg { width: 32px; height: 32px; margin-bottom: 8px; }
.big .caret { margin-top: 4px; }
.small { display: flex; align-items: center; gap: 4px; height: 28px; }
.small svg { width: 16px; height: 16px; }
.small .caret { margin-left: 2px; }
.small:disabled { color: #a9adae; }
.group-label {
  display: flex;
  align-items: center;
  justify-content: center;
  gap: 3px;
  height: 21px;
  padding: 0 5px;
}

/* Model tree panel */
.work { display: flex; flex: 1; }
.side {
  flex: none;
  width: 284px;
  border-right: 3px solid #dae0df;
}
.side-tabs { display: flex; height: 30px; margin-right: -3px; background: #dae0df; }
.side-tab { display: flex; align-items: center; gap: 5px; padding: 0 9px 0 8px; }
.side-tab.active { background: #f8fafc; }
.t-tree { width: 18px; height: 19px; }
.t-fold { width: 18px; height: 18px; }
.side-head {
  display: flex;
  align-items: center;
  gap: 7px;
  height: 28px;
  padding: 0 9px 0 28px;
}
.side-head h2 { margin-right: auto; font-size: 12px; font-weight: 500; }
.hide-tree { margin-left: 6px; }
.search-row {
  display: flex;
  align-items: center;
  gap: 4px;
  padding: 0 12px;
}
.search-row .caret { margin: 0 8px 0 1px; }
.search {
  display: flex;
  flex: 1;
  height: 29px;
  padding-right: 5px;
  border: 1px solid #a3b1ae;
  background: #fff;
}
.search input { flex: 1; min-width: 0; border: 0; background: none; font: inherit; }
.clear { width: 8px; height: 8px; }
.plus { width: 12px; height: 12px; }
.tree { padding-top: 5px; list-style: none; }
.tree li {
  position: relative;
  display: flex;
  align-items: center;
  gap: 5px;
  height: 24px;
  padding-left: 31px;
}
.tree li.root { gap: 6px; padding-left: 12px; }
.tree svg { width: 16px; height: 16px; }
.tree .root svg { width: 14px; height: 14px; }
.tree .more::before {
  content: "";
  position: absolute;
  left: 17px;
  width: 7px;
  height: 9px;
  background: #84888b;
  clip-path: polygon(0 0, 100% 50%, 0 100%);
}
.mark { width: 4px; height: 5px; margin: -8px -3px 0 0; background: #45494c; }
.insert { height: 2px; margin: 6px 5px 0 8px; border: 0; background: #5fca3c; }

/* Graphics area */
.stage { position: relative; flex: 1; min-width: 0; background: #e8eaed; }
.drawing { width: 100%; height: 100%; }
.lines, .curves { fill: none; stroke: #059163; }
.lines { shape-rendering: crispEdges; }
.viewbar {
  position: absolute;
  top: 7px;
  left: 50%;
  display: flex;
  align-items: center;
  justify-content: space-between;
  width: 400px;
  height: 33px;
  margin-left: -201px;
  padding: 0 7px 1px;
  border: 1px solid #8f9493;
  background: #f8fafc;
}
.viewbar .tool { position: relative; }
.viewbar svg { width: 16px; height: 16px; }
.sub::after {
  content: "";
  position: absolute;
  right: -3px;
  bottom: -3px;
  border: 2px solid;
  border-color: transparent #55595c #55595c transparent;
}
.instance, .tolerance { position: absolute; color: #8f919c; }
.instance { left: 11px; bottom: 6px; font-size: 15px; font-weight: 300; }
.tolerance {
  right: 61px;
  bottom: 7px;
  font: 300 16px/17px "Noto Sans", sans-serif;
  text-align: center;
}

/* Status bar */
.status {
  display: flex;
  align-items: center;
  gap: 7px;
  height: 35px;
  padding-left: 6px;
  border-top: 1px solid #b0bbbb;
  background: #f6fafb;
}
.status > .tool + .tool { margin-left: 3px; }
.status > .rule { margin-left: 5px; }
.st-toggle {
  display: flex;
  align-items: center;
  justify-content: center;
  width: 22px;
  height: 22px;
  border: 1px solid #a9adae;
  background: #dfe2e5;
}
.rule { flex: none; width: 1px; height: 27px; background: #b4b8ba; }
.message {
  display: flex;
  align-items: center;
  gap: 8px;
  padding-bottom: 2px;
  font-size: 11px;
}
.message::before { content: ""; width: 5px; height: 5px; border-radius: 50%; background: #176088; }
.st-right { display: flex; align-items: center; gap: 3px; margin-left: auto; }
.sheet { margin-right: 29px; }
.find { display: flex; height: 24px; border: 1px solid #b9bec0; background: #fbfcfd; }
.find .tool { width: 26px; }
.find .drop { width: 14px; border-left: 1px solid #b9bec0; }
.filter {
  position: relative;
  width: 177px;
  height: 25px;
  margin-left: 93px;
  border: 1px solid #b9bec0;
}
.filter select {
  width: 100%;
  height: 100%;
  padding: 0 8px;
  border: 0;
  background: none;
  color: inherit;
  font: inherit;
  appearance: none;
}
.filter .caret { position: absolute; right: 4px; top: 10px; }
.filter::after {
  content: "";
  position: absolute;
  top: 0;
  right: 15px;
  height: 100%;
  border-left: 1px solid #b9bec0;
}
.grip { width: 12px; height: 12px; margin: 14px 3px 0 0; }

/* Forum watermark over the corner */
.watermark {
  position: absolute;
  right: 1px;
  bottom: 0;
  display: grid;
  grid-template-columns: 58px auto;
  align-items: center;
  width: 206px;
  height: 63px;
  background: rgba(255, 255, 255, .3);
  pointer-events: none;
}
.watermark svg { grid-row: span 2; width: 60px; height: 60px; opacity: .85; }
.watermark strong {
  padding: 4px 0 0 12px;
  font-size: 29px;
  line-height: 30px;
  color: rgba(92, 190, 130, .65);
}
.watermark span { font-size: 15px; line-height: 20px; color: #b5dfd5; }
```
